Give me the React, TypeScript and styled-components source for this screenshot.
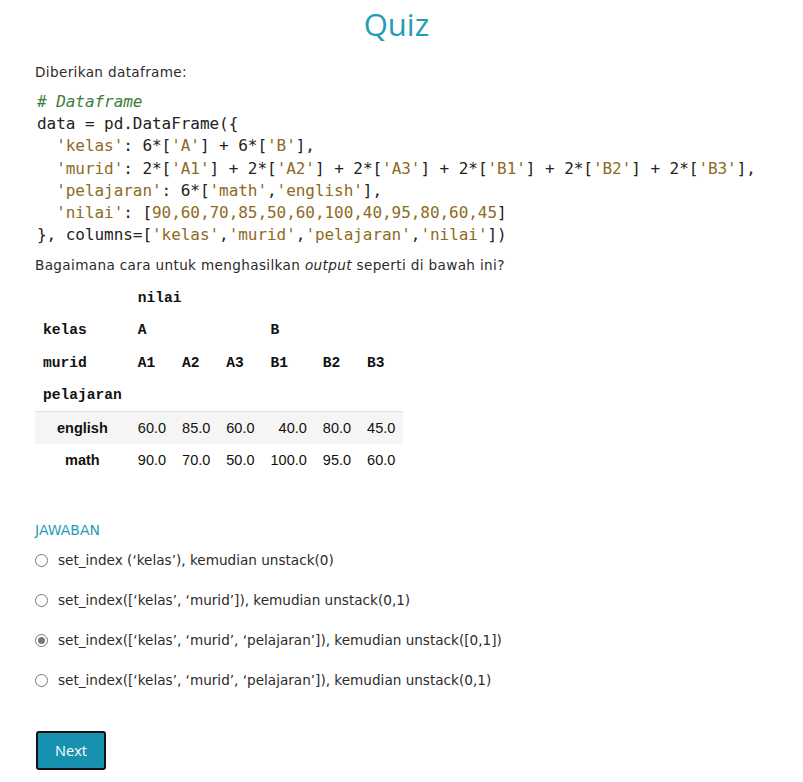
import React from "react";
import styled, { createGlobalStyle } from "styled-components";

const Global = createGlobalStyle`
  html, body { margin: 0; padding: 0; background: #fff; }
  body { font-family: "DejaVu Sans", "Open Sans", sans-serif; color: #333; }
`;

const Page = styled.div`
  padding: 4px 35px 12px 35px;
  display: flex;
  flex-direction: column;
`;

const Title = styled.h1`
  margin: 0 10px 0 0;
  text-align: center;
  font-family: "Open Sans", sans-serif;
  font-weight: 400;
  font-size: 31px;
  line-height: 40px;
  color: #1f9db8;
`;

const Para = styled.p<{ $mt?: number }>`
  margin: ${(p) => p.$mt ?? 0}px 0 0 0;
  font-size: 13.6px;
  line-height: 20px;
  letter-spacing: 0.35px;
  color: #2b2b2b;
`;

const Code = styled.pre`
  margin: 9px 0 0 2px;
  font-family: "DejaVu Sans Mono", "Liberation Mono", monospace;
  font-size: 16px;
  letter-spacing: -0.05px;
  line-height: 22.2px;
  color: #222;
  white-space: pre;
`;

const Cm = styled.span`
  color: #3b7d3b;
  font-style: italic;
`;
const Str = styled.span`
  color: #8d6b22;
`;

const Table = styled.table`
  margin-top: 6px;
  border-collapse: collapse;
  color: #111;
  align-self: flex-start;
`;

const HeadCell = styled.th`
  font-family: "Liberation Mono", "Courier New", monospace;
  font-weight: 700;
  font-size: 14.6px;
  text-align: left;
  height: 32.5px;
  padding: 0 8px;
  white-space: nowrap;
`;

const Row = styled.tr<{ $shade?: boolean }>`
  background: ${(p) => (p.$shade ? "#f5f5f5" : "transparent")};
  border-top: ${(p) => (p.$shade ? "1px solid #e2e2e2" : "none")};
`;

const IndexCell = styled.th`
  font-family: "Liberation Sans", Arial, sans-serif;
  font-weight: 700;
  font-size: 14.5px;
  text-align: center;
  height: 32px;
  padding: 0 8px;
  width: 78px;
`;

const DataCell = styled.td`
  font-family: "Liberation Sans", Arial, sans-serif;
  font-size: 14.5px;
  text-align: right;
  height: 32px;
  padding: 0 8px;
`;

const Label = styled.div`
  margin-top: 44px;
  font-size: 14px;
  line-height: 20px;
  color: #1f9db8;
`;

const Options = styled.div`
  display: flex;
  flex-direction: column;
`;

const Option = styled.label`
  display: flex;
  align-items: center;
  height: 40px;
  font-size: 13.6px;
  color: #2b2b2b;
  cursor: pointer;
`;

const Radio = styled.span<{ $checked?: boolean }>`
  width: 11px;
  height: 11px;
  border-radius: 50%;
  border: 1px solid #777;
  margin-right: 10px;
  display: flex;
  align-items: center;
  justify-content: center;
  flex: none;
  &::after {
    content: "";
    width: 7px;
    height: 7px;
    border-radius: 50%;
    background: ${(p) => (p.$checked ? "#777" : "transparent")};
  }
`;

const Button = styled.button`
  margin-top: 31px;
  margin-left: 1px;
  width: 70px;
  height: 39px;
  background: #1891b0;
  border: 2px solid #111;
  border-radius: 3px;
  color: #fff;
  font-family: "Open Sans", sans-serif;
  font-size: 14.5px;
  align-self: flex-start;
  cursor: pointer;
`;

const options = [
  "set_index (‘kelas’), kemudian unstack(0)",
  "set_index([‘kelas’, ‘murid’]), kemudian unstack(0,1)",
  "set_index([‘kelas’, ‘murid’, ‘pelajaran’]), kemudian unstack([0,1])",
  "set_index([‘kelas’, ‘murid’, ‘pelajaran’]), kemudian unstack(0,1)",
];

const rows = [
  { name: "english", vals: ["60.0", "85.0", "60.0", "40.0", "80.0", "45.0"] },
  { name: "math", vals: ["90.0", "70.0", "50.0", "100.0", "95.0", "60.0"] },
];

export default function App() {
  return (
    <>
      <Global />
      <Page>
        <Title>Quiz</Title>
        <Para $mt={18}>Diberikan dataframe:</Para>
        <Code>
          <Cm># Dataframe</Cm>
          {"\ndata = pd.DataFrame({\n  "}
          <Str>'kelas'</Str>: 6*[<Str>'A'</Str>] + 6*[<Str>'B'</Str>],{"\n  "}
          <Str>'murid'</Str>: 2*[<Str>'A1'</Str>] + 2*[<Str>'A2'</Str>] + 2*[
          <Str>'A3'</Str>] + 2*[<Str>'B1'</Str>] + 2*[<Str>'B2'</Str>] + 2*[
          <Str>'B3'</Str>],{"\n  "}
          <Str>'pelajaran'</Str>: 6*[<Str>'math'</Str>,<Str>'english'</Str>],{"\n  "}
          <Str>'nilai'</Str>: [<Str>90,60,70,85,50,60,100,40,95,80,60,45</Str>]{"\n"}
          {"}, columns=["}
          <Str>'kelas'</Str>,<Str>'murid'</Str>,<Str>'pelajaran'</Str>,<Str>'nilai'</Str>])
        </Code>
        <Para $mt={9}>
          Bagaimana cara untuk menghasilkan <em>output</em> seperti di bawah ini?
        </Para>
        <Table>
          <thead>
            <tr>
              <HeadCell />
              <HeadCell colSpan={6}>nilai</HeadCell>
            </tr>
            <tr>
              <HeadCell>kelas</HeadCell>
              <HeadCell colSpan={3}>A</HeadCell>
              <HeadCell colSpan={3}>B</HeadCell>
            </tr>
            <tr>
              <HeadCell>murid</HeadCell>
              {["A1", "A2", "A3", "B1", "B2", "B3"].map((h) => (
                <HeadCell key={h}>{h}</HeadCell>
              ))}
            </tr>
            <tr>
              <HeadCell>pelajaran</HeadCell>
              <HeadCell colSpan={6} />
            </tr>
          </thead>
          <tbody>
            {rows.map((r, i) => (
              <Row key={r.name} $shade={i === 0}>
                <IndexCell>{r.name}</IndexCell>
                {r.vals.map((v, j) => (
                  <DataCell key={j}>{v}</DataCell>
                ))}
              </Row>
            ))}
          </tbody>
        </Table>
        <Label>JAWABAN</Label>
        <Options>
          {options.map((o, i) => (
            <Option key={i}>
              <Radio $checked={i === 2} />
              {o}
            </Option>
          ))}
        </Options>
        <Button>Next</Button>
      </Page>
    </>
  );
}
